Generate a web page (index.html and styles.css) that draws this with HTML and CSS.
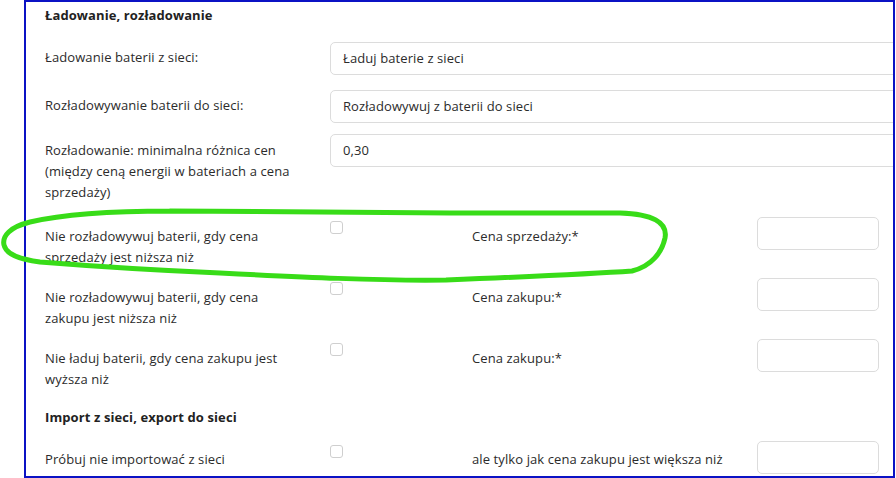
FILE: index.html
```html
<!DOCTYPE html>
<html lang="pl">
<head>
<meta charset="utf-8">
<title>Ustawienia baterii</title>
<link rel="stylesheet" href="styles.css">
</head>
<body>
<div class="frame">
  <div class="content">
    <div class="heading">Ładowanie, rozładowanie</div>

    <div class="row row-a">
      <div class="label">Ładowanie baterii z sieci:</div>
      <div class="field">Ładuj baterie z sieci</div>
    </div>

    <div class="row row-b">
      <div class="label">Rozładowywanie baterii do sieci:</div>
      <div class="field">Rozładowywuj z baterii do sieci</div>
    </div>

    <div class="row row-c">
      <div class="label label-c">Rozładowanie: minimalna różnica cen (między ceną energii w bateriach a cena sprzedaży)</div>
      <div class="field">0,30</div>
    </div>

    <div class="crow">
      <div class="clabel">Nie rozładowywuj baterii, gdy cena sprzedaży jest niższa niż</div>
      <div class="check-cell"><span class="checkbox"></span></div>
      <div class="clabel">Cena sprzedaży:*</div>
      <div class="small-field"></div>
    </div>

    <div class="crow">
      <div class="clabel">Nie rozładowywuj baterii, gdy cena zakupu jest niższa niż</div>
      <div class="check-cell"><span class="checkbox"></span></div>
      <div class="clabel">Cena zakupu:*</div>
      <div class="small-field"></div>
    </div>

    <div class="crow">
      <div class="clabel">Nie ładuj baterii, gdy cena zakupu jest wyższa niż</div>
      <div class="check-cell"><span class="checkbox"></span></div>
      <div class="clabel">Cena zakupu:*</div>
      <div class="small-field"></div>
    </div>

    <div class="heading heading-2">Import z sieci, export do sieci</div>

    <div class="crow crow-last">
      <div class="clabel">Próbuj nie importować z sieci</div>
      <div class="check-cell"><span class="checkbox"></span></div>
      <div class="clabel">ale tylko jak cena zakupu jest większa niż</div>
      <div class="small-field"></div>
    </div>
  </div>
</div>
<svg class="annotation" width="896" height="478" viewBox="0 0 896 478" aria-hidden="true">
  <path d="M 170 211 C 110 211 60 215 30 222 C 10 227 2 236 4 245 C 6 254 18 259 40 262 C 90 266 150 270 220 273 C 300 277 380 281 446 280 C 520 277 590 274 632 271 C 652 266 662 252 665 238 C 668 222 652 214 620 213 L 450 213 C 350 212 250 212 170 211" fill="none" stroke="#38dc18" stroke-width="5" stroke-linecap="round" stroke-linejoin="round"/>
</svg>
</body>
</html>
```

FILE: styles.css
```css
html, body {
  margin: 0;
  padding: 0;
  background: #ffffff;
}

body {
  width: 896px;
  height: 478px;
  position: relative;
  overflow: hidden;
  font-family: "Open Sans", "Noto Sans", "Liberation Sans", sans-serif;
  font-size: 13px;
  line-height: 21px;
  letter-spacing: 0.1px;
  color: #2b2b2b;
}

.frame {
  box-sizing: border-box;
  margin-left: 24px;
  width: 871px;
  height: 478px;
  border: 2px solid #0b12c4;
  overflow: hidden;
}

.content {
  padding: 3px 0 0 19px;
}

.heading {
  font-weight: 700;
  color: #222222;
  margin-bottom: 16px;
}

.heading-2 {
  margin-top: 17px;
  margin-bottom: 13px;
}

.row {
  display: grid;
  grid-template-columns: 285px 620px;
  align-items: start;
}

.row-a { margin-bottom: 15px; }
.row-b { margin-bottom: 11px; }
.row-c { margin-bottom: 14px; }

.label {
  padding-top: 5px;
  padding-right: 28px;
}

.label-c {
  padding-top: 6px;
}

.field {
  box-sizing: border-box;
  height: 33px;
  border: 1px solid #dcdcdc;
  border-radius: 5px;
  padding: 5px 12px;
  background: #ffffff;
}

.crow {
  display: grid;
  grid-template-columns: 285px 142px 285px 122px;
  align-items: start;
  margin-bottom: 10px;
}

.crow .clabel {
  padding-top: 9px;
  padding-right: 28px;
}

.check-cell {
  padding-top: 4px;
}

.checkbox {
  display: block;
  box-sizing: border-box;
  width: 13px;
  height: 13px;
  border: 1px solid #cfcfcf;
  border-radius: 3px;
  background: #ffffff;
}

.small-field {
  box-sizing: border-box;
  height: 33px;
  border: 1px solid #dcdcdc;
  border-radius: 5px;
  background: #ffffff;
}

.crow-last .clabel {
  padding-top: 8px;
}

.annotation {
  position: absolute;
  top: 0;
  left: 0;
  pointer-events: none;
}
```
